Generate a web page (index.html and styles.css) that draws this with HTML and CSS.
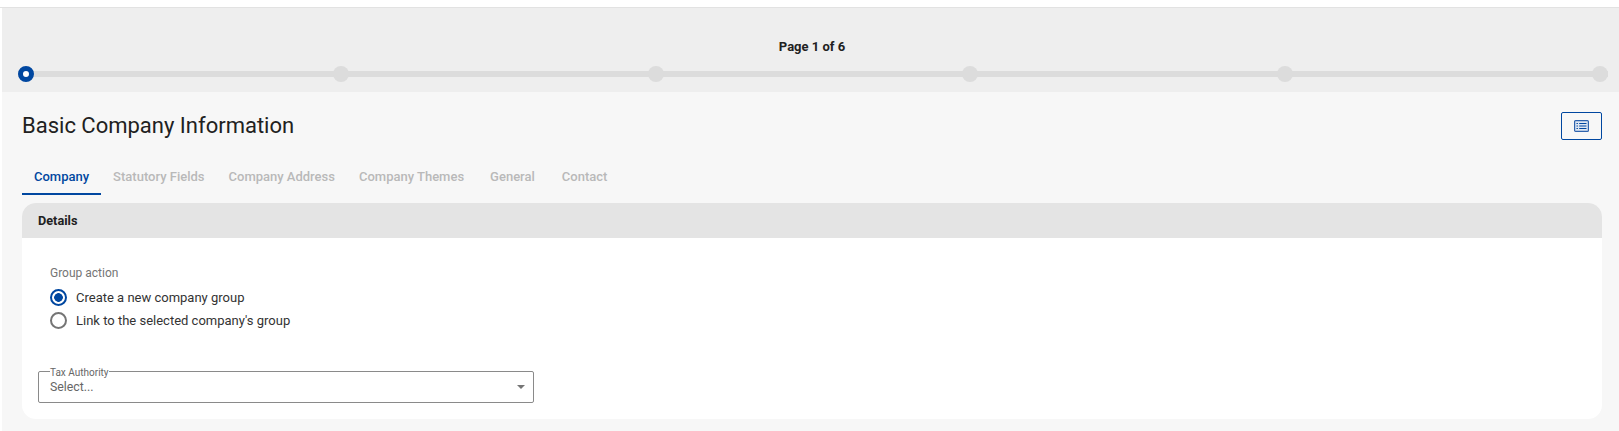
FILE: index.html
```html
<!DOCTYPE html>
<html lang="en">
<head>
<meta charset="utf-8">
<title>Basic Company Information</title>
<link rel="stylesheet" href="styles.css">
</head>
<body>
<div class="page">
  <header class="progress">
    <div class="progress-label">Page 1 of 6</div>
    <div class="stepper">
      <span class="step step-active"></span>
      <span class="step"></span>
      <span class="step"></span>
      <span class="step"></span>
      <span class="step"></span>
      <span class="step"></span>
    </div>
  </header>
  <main class="content">
    <div class="title-row">
      <h1 class="title">Basic Company Information</h1>
      <button class="icon-btn" type="button" aria-label="List">
        <svg width="15" height="12" viewBox="0 0 15 12" fill="none">
          <rect x="0.6" y="0.6" width="13.8" height="10.8" rx="1" fill="#dfe7f3" stroke="#2f63ad" stroke-width="1.2"/>
          <path d="M2.5 3.5h1.4M2.5 6h1.4M2.5 8.5h1.4M5.2 3.5h7.3M5.2 6h7.3M5.2 8.5h7.3" stroke="#0047a0" stroke-width="1.1"/>
        </svg>
      </button>
    </div>
    <nav class="tabs">
      <span class="tab tab-active">Company</span>
      <span class="tab">Statutory Fields</span>
      <span class="tab">Company Address</span>
      <span class="tab">Company Themes</span>
      <span class="tab tab-general">General</span>
      <span class="tab tab-contact">Contact</span>
    </nav>
    <section class="card">
      <div class="card-head">Details</div>
      <div class="card-body">
        <div class="group-label">Group action</div>
        <div class="radio-row"><span class="radio radio-on"></span><span>Create a new company group</span></div>
        <div class="radio-row"><span class="radio"></span><span>Link to the selected company's group</span></div>
        <fieldset class="select">
          <legend class="select-legend">Tax Authority</legend>
          <div class="select-value"><span>Select...</span><span class="caret"></span></div>
        </fieldset>
      </div>
    </section>
  </main>
</div>
</body>
</html>
```
FILE: styles.css
```css
* { box-sizing: border-box; }
html, body { margin: 0; padding: 0; background: #fff; }
body { font-family: Roboto, "Liberation Sans", sans-serif; color: #212121; height: 431px; overflow: hidden; }
.page { margin-top: 7px; padding-left: 2px; border-top: 1px solid #e2e2e2; height: 424px; display: flex; flex-direction: column; }

.progress { background: #eeeeee; height: 84px; padding: 31px 11px 0 16px; flex: none; }
.progress-label { font-size: 13px; font-weight: 700; line-height: 16px; text-align: center; color: #212121; padding-right: 2px; }
.stepper { display: flex; justify-content: space-between; align-items: center; margin-top: 11px; height: 16px; background: linear-gradient(#dcdcdc, #dcdcdc) center / 100% 6px no-repeat; }
.step { width: 16px; height: 16px; border-radius: 50%; background: #dcdcdc; }
.step-active { background: #fff; border: 5px solid #0047a0; }

.content { flex: 1; background: #f7f7f7; padding: 0 17px 0 20px; min-height: 0; }
.title-row { display: flex; justify-content: space-between; align-items: center; padding-top: 20px; height: 48px; }
.title { margin: 0; font-size: 22px; font-weight: 400; line-height: 28px; color: #212121; }
.icon-btn { width: 41px; height: 28px; padding: 0; border: 1px solid #0047a0; border-radius: 2px; background: transparent; display: flex; align-items: center; justify-content: center; }

.tabs { display: flex; margin-top: 21px; height: 34px; }
.tab { padding: 7px 12px 0; font-size: 13px; font-weight: 500; line-height: 18px; color: #b9b9b9; height: 34px; }
.tab-active { color: #0047a0; border-bottom: 2px solid #0047a0; }
.tab-general { margin-left: 2px; }
.tab-contact { margin-left: 3px; }

.card { background: #fff; border-radius: 14px; overflow: hidden; height: 216px; margin-top: 8px; }
.card-head { background: #e4e4e4; height: 35px; padding: 0 16px; font-size: 12.7px; font-weight: 700; line-height: 35px; color: #212121; }
.card-body { padding: 28px 27px 0 16px; }
.group-label { font-size: 12px; line-height: 14px; color: #757575; padding-left: 12px; }
.radio-row { display: flex; align-items: center; gap: 9px; height: 22px; font-size: 13px; color: #333; padding-left: 12px; }
.group-label + .radio-row { margin-top: 6px; }
.radio-row + .radio-row { margin-top: 1px; }
.radio { width: 17px; height: 17px; border: 2.5px solid #757575; border-radius: 50%; flex: none; }
.radio-on { border-color: #0047a0; background: radial-gradient(circle, #0047a0 0 4px, #fff 4.6px); }

.select { margin: 35px 0 0; padding: 0 11px; width: 496px; height: 37px; border: 1px solid #8a8a8a; border-radius: 2px; }
.select-legend { position: relative; top: 1px; padding: 0; margin: 0; font-size: 10px; line-height: 11px; color: #666; }
.select-value { display: flex; justify-content: space-between; align-items: center; height: 20px; font-size: 12.3px; color: #666; }
.caret { width: 0; height: 0; margin-right: -3px; border-left: 4px solid transparent; border-right: 4px solid transparent; border-top: 4px solid #757575; }
```
